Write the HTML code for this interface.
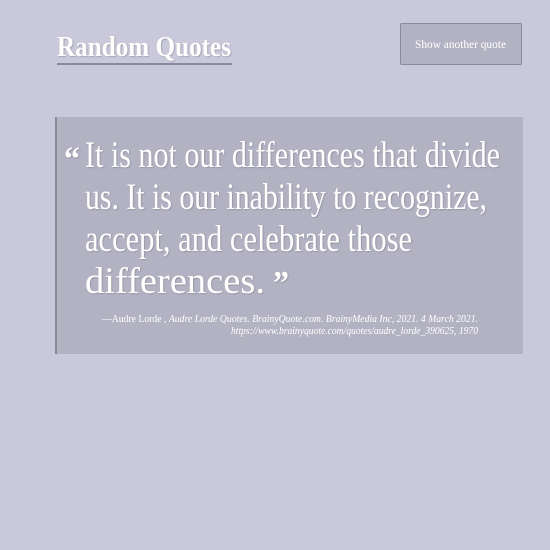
<!DOCTYPE html>
<html><head><meta charset="utf-8"><style>
html,body{margin:0;padding:0;background:#cac9db;width:550px;height:550px;overflow:hidden}
svg{display:block}
text{font-family:"Liberation Serif",serif;fill:#fff}
</style></head><body>
<svg width="550" height="550" viewBox="0 0 550 550">
<defs><filter id="s" x="-5%" y="-5%" width="110%" height="120%"><feDropShadow dx="0.8" dy="0.8" stdDeviation="0.5" flood-color="#6e6d80" flood-opacity="0.5"/></filter></defs>
<rect x="0" y="0" width="550" height="550" fill="#cac9db"/>
<g filter="url(#s)">
<text x="57" y="56" font-size="28" font-weight="bold" textLength="174" lengthAdjust="spacingAndGlyphs">Random Quotes</text>
</g>
<rect x="57" y="63" width="175" height="2" fill="#8a8a99"/>
<rect x="400.5" y="23.5" width="121" height="41" fill="#b3b2c3" stroke="#8a8a99" stroke-width="1" rx="1"/>
<text x="415" y="48" font-size="12" textLength="91" lengthAdjust="spacingAndGlyphs">Show another quote</text>
<rect x="55" y="117" width="468" height="237" fill="#b3b2c3"/>
<rect x="55" y="117" width="2" height="237" fill="#8a8a99"/>
<g filter="url(#s)">
<text x="64" y="170" font-size="34" font-weight="bold" textLength="16" lengthAdjust="spacingAndGlyphs">“</text>
<text x="85" y="167" font-size="37" textLength="415" lengthAdjust="spacingAndGlyphs">It is not our differences that divide</text>
<text x="85" y="209" font-size="37" textLength="402" lengthAdjust="spacingAndGlyphs">us. It is our inability to recognize,</text>
<text x="85" y="251" font-size="37" textLength="327" lengthAdjust="spacingAndGlyphs">accept, and celebrate those</text>
<text x="85" y="293" font-size="37" textLength="180" lengthAdjust="spacingAndGlyphs">differences.</text>
<text x="273" y="294" font-size="34" font-weight="bold" textLength="16" lengthAdjust="spacingAndGlyphs">”</text>
</g>
<text x="102" y="322" font-size="10.5" textLength="376" lengthAdjust="spacingAndGlyphs">—Audre Lorde , <tspan font-style="italic">Audre Lorde Quotes. BrainyQuote.com. BrainyMedia Inc, 2021. 4 March 2021.</tspan></text>
<text x="231" y="334" font-size="10.5" font-style="italic" textLength="247" lengthAdjust="spacingAndGlyphs">https://www.brainyquote.com/quotes/audre_lorde_390625, 1970</text>
</svg>
</body></html>
